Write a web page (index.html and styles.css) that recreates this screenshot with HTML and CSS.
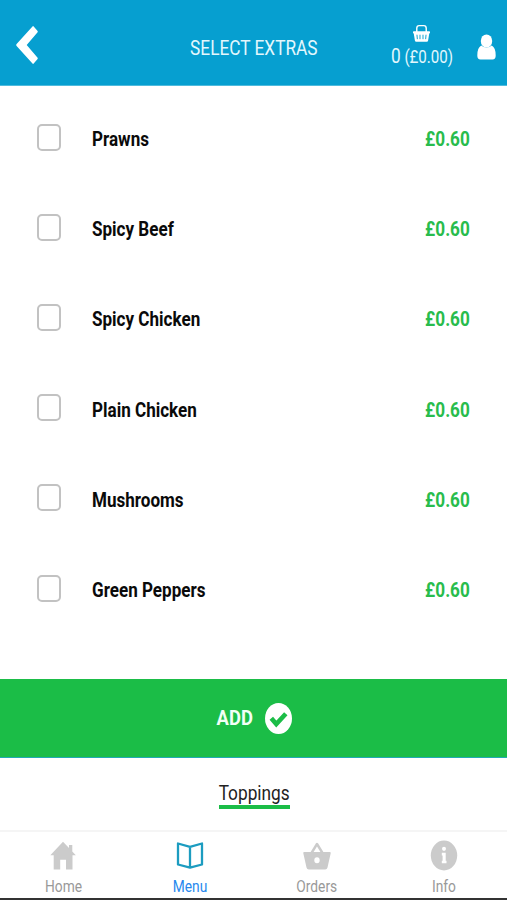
FILE: index.html
```html
<!DOCTYPE html>
<html lang="en">
<head>
<meta charset="utf-8">
<title>Select Extras</title>
<link rel="stylesheet" href="styles.css">
</head>
<body>
<div class="app">
  <header class="header">
    <svg class="back" viewBox="0 0 24 40"><path d="M17.700 1.200Q18.200.9 18.700 1.400L22.600 6Q23 6.600 22.600 7.200L11.700 20 22.600 32.800Q23 33.400 22.600 34L18.700 38.600Q18.200 39.100 17.700 38.800L1.400 20.800Q1 20 1.400 19.200z" fill="#fff"/></svg>
    <h1 class="title"><span class="t">SELECT EXTRAS</span></h1>
    <div class="basket">
      <svg class="basket-icon" viewBox="0 0 18 19"><path d="M4 8V4Q4 1.200 6.500 1.200h5Q14 1.200 14 4v4" fill="none" stroke="#fff" stroke-width="1.500"/><path d="M.7 7h16.600q.7 0 .7 1v.8q0 .8-.8.8L16 17q-.2 1.300-1.400 1.300H3.400Q2.200 18.300 2 17L.8 9.600Q0 9.600 0 8.800V8q0-1 .7-1z" fill="#fff"/><path d="M4.200 10.800l.4 4.700M7.400 10.800v4.700M10.600 10.800v4.700M13.800 10.800l-.4 4.700" stroke="#069fd0" stroke-width="1"/></svg>
      <div class="basket-text"><span class="t"><span class="count">0</span> (£0.00)</span></div>
    </div>
    <svg class="user" viewBox="0 0 19 26"><ellipse cx="9.500" cy="7" rx="5.700" ry="6.600" fill="#fff"/><path d="M4.300 11.500Q.3 13.500.3 21.500q0 4 3.200 4h12q3.200 0 3.200-4 0-8-4-10-2 2-5.200 2t-5.200-2z" fill="#fff"/></svg>
  </header>
  <main class="list">
    <label class="row"><span class="box"></span><span class="name">Prawns</span><span class="price">£0.60</span></label>
    <label class="row"><span class="box"></span><span class="name">Spicy Beef</span><span class="price">£0.60</span></label>
    <label class="row"><span class="box"></span><span class="name">Spicy Chicken</span><span class="price">£0.60</span></label>
    <label class="row"><span class="box"></span><span class="name">Plain Chicken</span><span class="price">£0.60</span></label>
    <label class="row"><span class="box"></span><span class="name">Mushrooms</span><span class="price">£0.60</span></label>
    <label class="row"><span class="box"></span><span class="name">Green Peppers</span><span class="price">£0.60</span></label>
  </main>
  <div class="add">
    <span class="add-text">ADD</span>
    <svg class="check" viewBox="0 0 27 31"><ellipse cx="13.500" cy="15.500" rx="13.500" ry="15.400" fill="#fff"/><path d="M6.300 15.300l5 5.800L20.800 10.800" fill="none" stroke="#1bbd47" stroke-width="4.600"/></svg>
  </div>
  <div class="category"><div class="tab"><span class="t">Toppings</span></div></div>
  <nav class="nav">
    <a class="item"><svg class="icon" viewBox="0 0 28 32"><path d="M14 1.800 1.300 15.200H4.700V29.500H11.200V19.700H17V29.500H23.500V15.200H26.800L23.300 11.500V5H20V8.100z" fill="#cbcbcb"/></svg><span class="label">Home</span></a>
    <a class="item active"><svg class="icon" viewBox="0 0 28 32"><path d="M14 6.800 2 3.500V24.500L14 27.700 26 24.500V3.500L14 6.800zV27.500" fill="none" stroke="#1c9cc0" stroke-width="2.300" stroke-linejoin="round"/></svg><span class="label">Menu</span></a>
    <a class="item"><svg class="icon" viewBox="0 0 28 32"><path d="M8.500 13 14 4l5.500 9" fill="none" stroke="#cbcbcb" stroke-width="2.400" stroke-linejoin="round"/><path fill-rule="evenodd" d="M1.200 12H26.800q1.200 0 .9 1.300L24.500 27.500q-.5 2-2.300 2H5.800q-1.800 0-2.300-2L.3 13.300Q0 12 1.200 12zM14 17.300a2.700 3 0 1 0 0 6 2.700 3 0 1 0 0-6z" fill="#cbcbcb"/></svg><span class="label">Orders</span></a>
    <a class="item"><svg class="icon" viewBox="0 0 28 32"><ellipse cx="14" cy="15.500" rx="13.200" ry="15" fill="#cbcbcb"/><ellipse cx="14" cy="8.800" rx="2" ry="2.100" fill="#fff"/><path d="M11.800 12.800h3.900v7.900h.8v2.600h-4.700v-2.600h.8v-5.300h-.8z" fill="#fff"/></svg><span class="label">Info</span></a>
  </nav>
</div>
</body>
</html>
```
FILE: styles.css
```css
* { box-sizing: border-box; }
body { margin: 0; background: #fff; font-family: Roboto, "Liberation Sans", sans-serif; }
.app { width: 507px; height: 900px; display: flex; flex-direction: column; overflow: hidden; border-bottom: 2px solid #333; }
.header { flex: none; height: 86px; background: #069fd0; border-bottom: 1px solid #4fbbdd; display: grid; grid-template-columns: 127px 253px 83px 44px; align-items: start; color: #e3f7fd; }
.back { width: 24px; height: 40px; margin: 25px 0 0 15px; }
.title { margin: 36px 0 0; font-size: 20px; line-height: 24px; font-weight: 400; text-align: center; white-space: nowrap; }
.t { display: inline-block; transform: scaleX(.863); white-space: nowrap; }
.basket { display: flex; flex-direction: column; align-items: center; padding-top: 24px; }
.basket-icon { width: 17px; height: 19px; }
.basket-text { font-size: 17.500px; line-height: 24px; margin-top: 1px; white-space: nowrap; }
.count { font-size: 20px; }
.user { width: 19px; height: 26px; margin: 34px 0 0 14px; }
.list { flex: none; height: 593px; padding-top: 8px; }
.row { height: 90.200px; display: flex; align-items: center; padding: 0 37px; }
.box { width: 24px; height: 27px; margin-bottom: 4px; border: 2px solid #c2c2c2; border-radius: 5px; }
.name, .price { font-size: 19.500px; line-height: 24px; font-weight: 700; white-space: nowrap; padding-top: 2px; }
.name { margin-left: 31px; color: #0a0a0a; transform: scaleX(.875); transform-origin: left; }
.price { margin-left: auto; color: #28bc4c; transform: scaleX(.88); transform-origin: right; }
.add { flex: none; height: 79px; background: #1bbd47; border-bottom: 1px solid #22aab5; display: flex; align-items: center; justify-content: center; gap: 10px; color: #f1fff5; }
.add-text { font-size: 20px; line-height: 24px; font-weight: 700; transform: scaleX(.92); }
.check { width: 27px; height: 31px; }
.category { flex: none; height: 72px; display: flex; justify-content: center; align-items: flex-start; padding: 23px 0 0 1px; }
.tab { width: 71px; height: 28px; border-bottom: 4px solid #1bbd47; display: flex; justify-content: center; font-size: 20px; line-height: 24px; color: #222; }
.nav { flex: none; height: 68px; border-top: 2px solid #f5f5f5; display: grid; grid-template-columns: repeat(4, 1fr); }
.item { display: flex; flex-direction: column; align-items: center; color: #999; padding-top: 8px; }
.icon { width: 28px; height: 32px; }
.label { font-size: 16px; line-height: 20px; margin-top: 5px; transform: scaleX(.86); white-space: nowrap; }
.active { color: #2688ee; }
```
